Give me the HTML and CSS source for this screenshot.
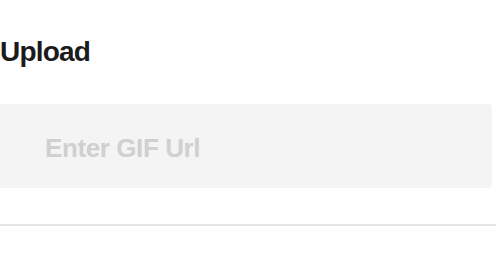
FILE: index.html
```html
<!DOCTYPE html>
<html lang="en">
<head>
<meta charset="utf-8">
<link rel="stylesheet" href="styles.css">
</head>
<body>
<main class="upload">
  <h2 class="upload-title">Upload</h2>
  <div class="field">
    <input class="field-input" type="text" placeholder="Enter GIF Url">
  </div>
  <hr class="divider">
</main>
</body>
</html>
```
FILE: styles.css
```css
html, body {
  margin: 0;
  padding: 0;
  background: #ffffff;
}
body {
  width: 496px;
  height: 258px;
  overflow: hidden;
  font-family: "Liberation Sans", Arial, sans-serif;
}
.upload {
  display: flex;
  flex-direction: column;
  padding-top: 36px;
}
.upload-title {
  margin: 0;
  font-size: 28px;
  line-height: 32px;
  font-weight: 700;
  color: #1b1b1b;
  letter-spacing: -0.8px;
}
.field {
  margin-top: 36px;
  width: 492px;
  height: 84px;
  background: #f4f4f4;
  border-radius: 0 4px 4px 0;
  display: flex;
}
.field-input {
  flex: 1;
  border: none;
  outline: none;
  background: transparent;
  padding: 4px 0 0 45px;
  margin: 0;
  font-family: "Liberation Sans", Arial, sans-serif;
  font-size: 26px;
  font-weight: 700;
  letter-spacing: -0.4px;
  color: #333;
}
.field-input::placeholder {
  color: #d0d0d0;
  opacity: 1;
}
.divider {
  margin: 36px 0 0;
  border: none;
  height: 2px;
  background: #e6e6e6;
}
```
